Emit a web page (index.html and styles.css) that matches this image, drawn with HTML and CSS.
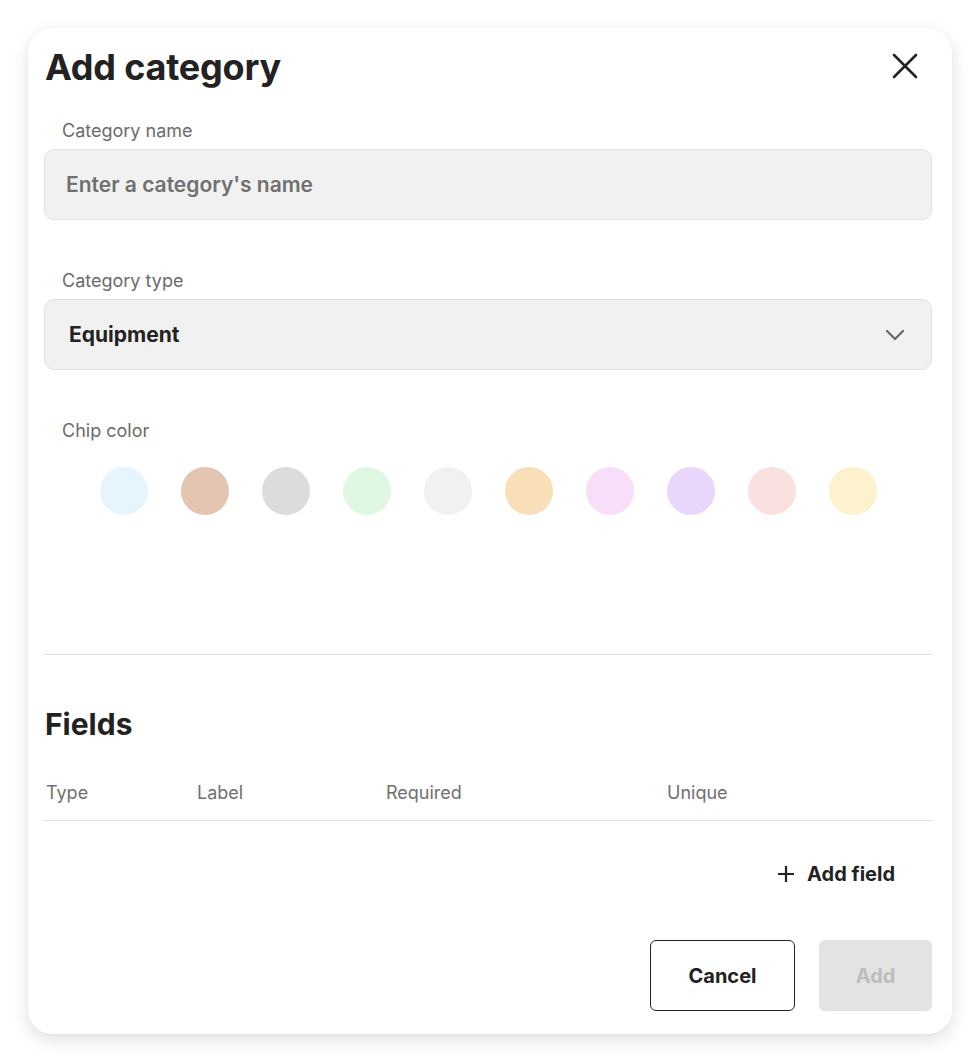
FILE: index.html
```html
<!DOCTYPE html>
<html lang="en">
<head>
<meta charset="utf-8">
<title>Add category</title>
<link rel="stylesheet" href="styles.css">
</head>
<body>
<div class="modal">
  <div class="header">
    <h1 class="title">Add category</h1>
    <button class="close" aria-label="Close">
      <svg width="26" height="26" viewBox="0 0 26 26"><path d="M2 2 L24 24 M24 2 L2 24" stroke="#222" stroke-width="2.6" stroke-linecap="round" fill="none"/></svg>
    </button>
  </div>

  <label class="label first">Category name</label>
  <div class="input placeholder">Enter a category's name</div>

  <label class="label">Category type</label>
  <div class="input select">
    <span class="value">Equipment</span>
    <svg class="chevron" width="20" height="12" viewBox="0 0 20 12"><path d="M2 2 L10 10 L18 2" stroke="#666" stroke-width="2.2" stroke-linecap="round" stroke-linejoin="round" fill="none"/></svg>
  </div>

  <label class="label">Chip color</label>
  <div class="chips">
    <span class="chip c1"></span>
    <span class="chip c2"></span>
    <span class="chip c3"></span>
    <span class="chip c4"></span>
    <span class="chip c5"></span>
    <span class="chip c6"></span>
    <span class="chip c7"></span>
    <span class="chip c8"></span>
    <span class="chip c9"></span>
    <span class="chip c10"></span>
  </div>

  <hr class="divider">

  <h2 class="fields-title">Fields</h2>
  <div class="table-head">
    <span>Type</span>
    <span>Label</span>
    <span>Required</span>
    <span>Unique</span>
  </div>

  <div class="add-field-row">
    <button class="add-field">
      <svg width="18" height="18" viewBox="0 0 18 18"><path d="M9 1 V17 M1 9 H17" stroke="#222" stroke-width="2.2" fill="none"/></svg>
      <span>Add field</span>
    </button>
  </div>

  <div class="actions">
    <button class="btn cancel">Cancel</button>
    <button class="btn add" disabled>Add</button>
  </div>
</div>
</body>
</html>
```

FILE: styles.css
```css
* { box-sizing: border-box; }

html, body {
  margin: 0;
  padding: 0;
  background: #ffffff;
  font-family: Inter, "Noto Sans", "Liberation Sans", sans-serif;
  color: #222222;
}

body {
  padding: 28px 28px 28px 28px;
}

.modal {
  width: 924px;
  background: #ffffff;
  border-radius: 24px;
  box-shadow: 0 6px 18px rgba(0, 0, 0, 0.12), 0 0 3px rgba(0, 0, 0, 0.04);
  padding: 17px 20px 23px 16px;
  display: flex;
  flex-direction: column;
}

.modal > * {
  flex-shrink: 0;
}

.header {
  display: flex;
  align-items: center;
  justify-content: space-between;
  height: 44px;
}

.title {
  margin: 0 0 0 1px;
  font-size: 36px;
  line-height: 44px;
  font-weight: 700;
  letter-spacing: -0.2px;
  color: #222222;
}

.close {
  border: 0;
  background: transparent;
  padding: 0;
  margin-right: 14px;
  margin-top: -2px;
  width: 26px;
  height: 26px;
  display: flex;
  align-items: center;
  justify-content: center;
}

.label {
  display: block;
  margin: 49px 0 6px 18px;
  font-size: 18px;
  line-height: 24px;
  color: #6b6b6b;
}

.label.first {
  margin-top: 30px;
}

.input {
  height: 71px;
  background: #f1f1f1;
  border: 1px solid #e2e2e2;
  border-radius: 10px;
  display: flex;
  align-items: center;
  font-size: 21px;
  font-weight: 600;
}

.placeholder {
  padding-left: 21px;
  color: #707070;
}

.select {
  padding: 0 26px 0 24px;
  justify-content: space-between;
}

.select .value {
  color: #222222;
  font-weight: 700;
}

.chips {
  margin-top: 18px;
  display: flex;
  justify-content: center;
  gap: 33px;
}

.chip {
  width: 48px;
  height: 48px;
  border-radius: 50%;
  display: block;
}

.c1 { background: #e6f5fd; }
.c2 { background: #e3c5b1; }
.c3 { background: #dcdcdc; }
.c4 { background: #dff7e3; }
.c5 { background: #f1f1f1; }
.c6 { background: #f9dfb7; }
.c7 { background: #f8dff9; }
.c8 { background: #ead5fb; }
.c9 { background: #f9e1e0; }
.c10 { background: #fdf2cd; }

.divider {
  margin: 139px 0 0 0;
  border: 0;
  height: 1px;
  background: #e0e0e0;
}

.fields-title {
  margin: 51px 0 0 1px;
  font-size: 30px;
  line-height: 36px;
  font-weight: 700;
  color: #222222;
}

.table-head {
  margin-top: 39px;
  display: grid;
  grid-template-columns: 151px 189px 281px 1fr;
  padding: 0 0 15px 2px;
  border-bottom: 1px solid #e0e0e0;
  font-size: 18px;
  line-height: 24px;
  color: #707070;
}

.add-field-row {
  margin-top: 39px;
  display: flex;
  justify-content: flex-end;
  padding-right: 37px;
}

.add-field {
  border: 0;
  background: transparent;
  padding: 0;
  display: flex;
  align-items: center;
  gap: 12px;
  font-family: inherit;
  font-size: 20px;
  line-height: 28px;
  font-weight: 700;
  color: #222222;
}

.actions {
  margin-top: 52px;
  display: flex;
  justify-content: flex-end;
  gap: 24px;
}

.btn {
  height: 71px;
  border-radius: 6px;
  font-family: inherit;
  font-size: 20px;
  font-weight: 700;
}

.cancel {
  width: 145px;
  background: #ffffff;
  border: 1px solid #222222;
  color: #222222;
}

.add {
  width: 113px;
  background: #e3e3e3;
  border: 0;
  color: #bdbdbd;
}
```
